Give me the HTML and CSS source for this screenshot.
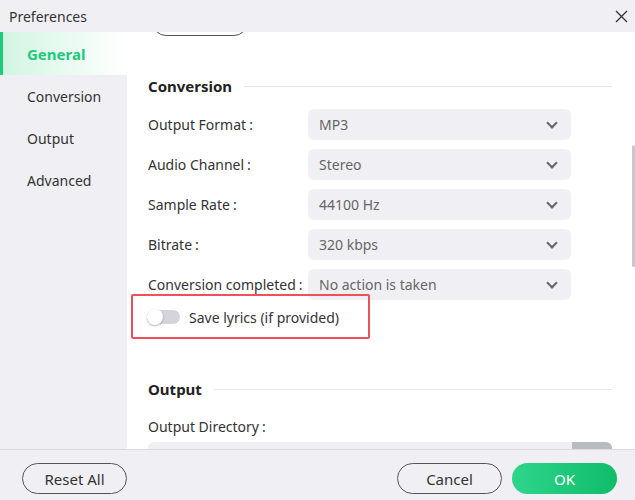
FILE: index.html
```html
<!DOCTYPE html>
<html lang="en">
<head>
    <meta charset="UTF-8">
    <meta name="viewport" content="width=device-width, initial-scale=1.0">
    <title>Preferences</title>
    <link rel="stylesheet" href="styles.css">
</head>
<body>
    <div class="window">
        <div class="titlebar">
            <span class="title">Preferences</span>
            <svg class="close" width="13" height="13" viewBox="0 0 13 13">
                <path d="M1 1 L12 12 M12 1 L1 12" stroke="#333" stroke-width="1.3" fill="none"/>
            </svg>
        </div>
        <div class="main">
            <div class="sidebar">
                <div class="nav-item active">General</div>
                <div class="nav-item">Conversion</div>
                <div class="nav-item">Output</div>
                <div class="nav-item">Advanced</div>
            </div>
            <div class="content">
                <div class="cut-button"></div>

                <div class="section-title">
                    <span>Conversion</span>
                    <div class="line"></div>
                </div>
                <div class="rows">
                    <div class="row">
                        <label>Output Format<span class="colon">:</span></label>
                        <div class="select"><span>MP3</span><i class="chevron"></i></div>
                    </div>
                    <div class="row">
                        <label>Audio Channel<span class="colon">:</span></label>
                        <div class="select"><span>Stereo</span><i class="chevron"></i></div>
                    </div>
                    <div class="row">
                        <label>Sample Rate<span class="colon">:</span></label>
                        <div class="select"><span>44100 Hz</span><i class="chevron"></i></div>
                    </div>
                    <div class="row">
                        <label>Bitrate<span class="colon">:</span></label>
                        <div class="select"><span>320 kbps</span><i class="chevron"></i></div>
                    </div>
                    <div class="row">
                        <label>Conversion completed<span class="colon">:</span></label>
                        <div class="select"><span>No action is taken</span><i class="chevron"></i></div>
                    </div>
                </div>
                <div class="toggle-row">
                    <div class="toggle"><div class="knob"></div></div>
                    <span>Save lyrics (if provided)</span>
                </div>
                <div class="highlight"></div>

                <div class="section-title output-title">
                    <span>Output</span>
                    <div class="line"></div>
                </div>
                <div class="field-label">Output Directory<span class="colon">:</span></div>
                <div class="dir-input"><div class="dir-btn"></div></div>

                <div class="scrollbar"></div>
            </div>
        </div>
        <div class="footer">
            <button class="btn">Reset All</button>
            <div class="spacer"></div>
            <button class="btn">Cancel</button>
            <button class="btn btn-ok">OK</button>
        </div>
    </div>
</body>
</html>
```

FILE: styles.css
```css
body {
    margin: 0;
    font-family: "Noto Sans", "Noto Sans CJK SC", sans-serif;
    color: #333;
    background-color: #fff;
}
.window {
    width: 635px;
    height: 500px;
    display: flex;
    flex-direction: column;
    overflow: hidden;
}
.titlebar {
    height: 32px;
    flex-shrink: 0;
    background-color: #f0f0f4;
    display: flex;
    align-items: center;
    justify-content: space-between;
    padding: 0 7px 0 9px;
}
.title {
    font-size: 14px;
    color: #333;
}
.main {
    flex: 1;
    display: flex;
    min-height: 0;
}
.sidebar {
    width: 127px;
    flex-shrink: 0;
    background-color: #f0f0f4;
}
.nav-item {
    height: 42px;
    line-height: 44px;
    padding-left: 27px;
    font-size: 14px;
    color: #333;
}
.nav-item.active {
    height: 43px;
    line-height: 45px;
    padding-left: 24px;
    border-left: 3px solid #1ecb7b;
    background: linear-gradient(to right, #d2f5e3, #ffffff);
    color: #1ecb7b;
    font-weight: bold;
    font-size: 15px;
}
.colon {
    margin-left: 3px;
}
.content {
    flex: 1;
    position: relative;
    overflow: hidden;
    padding: 0 23px 0 21px;
}
.cut-button {
    width: 94px;
    height: 28px;
    margin: -26px 0 0 4px;
    border: 1px solid #555;
    border-radius: 14px;
}
.section-title {
    display: flex;
    align-items: center;
    margin-top: 40px;
    font-size: 15px;
    font-weight: bold;
    line-height: 20px;
    color: #222;
}
.section-title .line {
    flex: 1;
    height: 1px;
    margin-left: 12px;
    background-color: #e8e8ec;
}
.rows {
    display: flex;
    flex-direction: column;
    gap: 9px;
    margin-top: 13px;
}
.row {
    display: flex;
    align-items: center;
    height: 31px;
}
.row label {
    width: 160px;
    font-size: 14px;
    color: #333;
    white-space: nowrap;
}
.select {
    width: 263px;
    height: 31px;
    box-sizing: border-box;
    padding: 0 12px 0 11px;
    background-color: #f0f0f4;
    border-radius: 6px;
    display: flex;
    align-items: center;
    justify-content: space-between;
    font-size: 14px;
    color: #666;
}
.chevron {
    width: 6px;
    height: 6px;
    border-right: 2px solid #666;
    border-bottom: 2px solid #666;
    transform: translateY(-2px) rotate(45deg);
    margin-right: 3px;
}
.toggle-row {
    display: flex;
    align-items: center;
    height: 20px;
    margin-top: 7px;
    font-size: 14px;
    color: #333;
}
.toggle {
    width: 33px;
    height: 14px;
    margin-left: -1px;
    margin-right: 9px;
    border-radius: 7px;
    background-color: #d4d4da;
    position: relative;
}
.knob {
    position: absolute;
    left: 0;
    top: -1px;
    width: 16px;
    height: 16px;
    border-radius: 50%;
    background-color: #fff;
    box-shadow: 0 1px 2px rgba(0, 0, 0, 0.3);
}
.highlight {
    position: absolute;
    left: 4px;
    top: 262px;
    width: 235px;
    height: 41px;
    border: 2px solid #f0505a;
    border-radius: 2px;
}
.output-title {
    margin-top: 52px;
}
.field-label {
    margin-top: 18px;
    font-size: 14px;
    color: #333;
}
.dir-input {
    margin-top: 6px;
    height: 31px;
    background-color: #f0f0f4;
    border-radius: 6px;
    display: flex;
    justify-content: flex-end;
    overflow: hidden;
}
.dir-btn {
    width: 40px;
    background-color: #b8bcc0;
}
.scrollbar {
    position: absolute;
    right: 0;
    top: 113px;
    width: 3px;
    height: 122px;
    border-radius: 2px;
    background-color: #c8c8cc;
}
.footer {
    height: 51px;
    flex-shrink: 0;
    box-sizing: border-box;
    border-top: 1px solid #dcdce0;
    background-color: #f0f0f4;
    display: flex;
    align-items: flex-start;
    padding: 13px 18px 0 22px;
    gap: 10px;
}
.spacer {
    flex: 1;
}
.btn {
    width: 105px;
    height: 31px;
    border: 1px solid #555;
    border-radius: 16px;
    background: transparent;
    font-family: "Noto Sans", sans-serif;
    font-size: 15px;
    color: #333;
    cursor: pointer;
}
.btn-ok {
    border: none;
    background: linear-gradient(to right, #2ed58c, #0fbc69);
    color: #fff;
}
```
